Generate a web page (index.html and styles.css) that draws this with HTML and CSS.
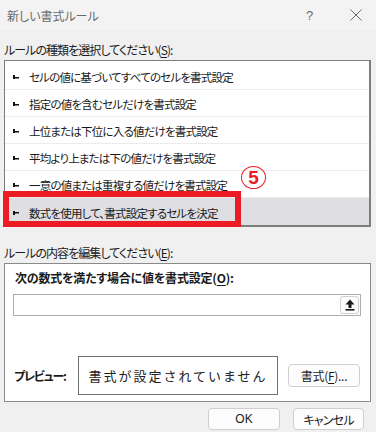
FILE: index.html
```html
<!DOCTYPE html>
<html lang="ja">
<head>
<meta charset="utf-8">
<title>新しい書式ルール</title>
<link rel="stylesheet" href="styles.css">
</head>
<body>
<div class="dialog">
  <div class="titlebar">
    <span class="title">新しい書式ルール</span>
    <span class="help">?</span>
    <span class="close"><svg width="12" height="12" viewBox="0 0 12 12"><path d="M0.5 0.5 L11.5 11.5 M11.5 0.5 L0.5 11.5" stroke="#6a6a6a" stroke-width="1" fill="none"/></svg></span>
  </div>
  <div class="label first">ルールの種類を選択してください(<u>S</u>):</div>
  <ul class="rules">
    <li><span class="bullet"></span>セルの値に基づいてすべてのセルを書式設定</li>
    <li><span class="bullet"></span>指定の値を含むセルだけを書式設定</li>
    <li><span class="bullet"></span>上位または下位に入る値だけを書式設定</li>
    <li><span class="bullet"></span>平均より上または下の値だけを書式設定</li>
    <li><span class="bullet"></span>一意の値または重複する値だけを書式設定</li>
    <li class="selected"><span class="bullet"></span>数式を使用して、書式設定するセルを決定</li>
  </ul>
  <div class="label second">ルールの内容を編集してください(<u>E</u>):</div>
  <div class="group">
    <div class="group-title">次の数式を満たす場合に値を書式設定(<u>O</u>):</div>
    <div class="formula">
      <div class="ref-btn"><svg width="10" height="12" viewBox="0 0 10 12"><path d="M5 0.5 L9.5 5.5 L6.5 5.5 L6.5 9 L3.5 9 L3.5 5.5 L0.5 5.5 Z" fill="#1a1a1a"/><rect x="0.5" y="10" width="9" height="1.6" fill="#1a1a1a"/></svg></div>
    </div>
    <div class="preview-row">
      <span class="preview-label">プレビュー:</span>
      <div class="preview">書式が設定されていません</div>
      <div class="btn format-btn">書式(<u>F</u>)...</div>
    </div>
  </div>
  <div class="actions">
    <div class="btn ok">OK</div>
    <div class="btn cancel">キャンセル</div>
  </div>
  <div class="highlight"></div>
  <div class="badge">5</div>
</div>
</body>
</html>
```
FILE: styles.css
```css
html, body {
  margin: 0;
  padding: 0;
}
body {
  background: #f0f0f0;
  font-family: "Noto Sans CJK JP", "Noto Sans", sans-serif;
  font-size: 12px;
  color: #1a1a1a;
  font-feature-settings: "palt";
}
.dialog {
  position: relative;
  width: 376px;
  height: 432px;
  overflow: hidden;
}
.titlebar {
  height: 30px;
  display: flex;
  align-items: center;
  padding-left: 7px;
  background: #f3f3f3;
}
.title {
  flex: 1;
  color: #6a6a6a;
  font-size: 12px;
}
.help {
  color: #6a6a6a;
  font-family: "Liberation Sans", sans-serif;
  font-size: 13px;
  width: 10px;
  margin-right: 34px;
}
.close {
  display: flex;
  margin-right: 14px;
}
.label {
  height: 16px;
  line-height: 16px;
  padding-left: 4px;
  font-size: 12px;
  letter-spacing: -0.95px;
}
.label.first { margin-top: 12px; }
.label.second { margin-top: 18px; }
u { text-decoration-thickness: 1px; text-underline-offset: 2px; }
.rules {
  list-style: none;
  margin: 2px 5px 0 4px;
  padding: 2px 0 0 0;
  background: #fff;
  border: 1px solid #7d7d7d;
  border-right-width: 2px;
  border-bottom-width: 2px;
}
.rules li {
  height: 24px;
  display: flex;
  align-items: center;
  border-bottom: 1px solid #ececec;
  padding-left: 8px;
  padding-top: 2px;
  font-size: 11.5px;
  letter-spacing: -0.8px;
}
.rules li:last-child {
  border-bottom: none;
  height: 25px;
}
.rules li.selected {
  background: #dedee3;
}
.bullet {
  display: inline-block;
  width: 6px;
  height: 4px;
  margin-right: 10px;
  background:
    linear-gradient(#111, #111) 0 0 / 2px 4px no-repeat,
    linear-gradient(#111, #111) 0 1.5px / 6px 1.5px no-repeat;
}
.group {
  margin: 2px 5px 0 4px;
  border: 1px solid #8a8a8a;
  background: #fff;
  padding: 6px 9px 6px 8px;
}
.group-title {
  height: 16px;
  line-height: 16px;
  font-weight: bold;
  padding-left: 2px;
  letter-spacing: -0.2px;
}
.formula {
  margin-top: 8px;
  height: 20px;
  border: 1px solid #adadad;
  display: flex;
  justify-content: flex-end;
  align-items: center;
  padding-right: 1px;
}
.ref-btn {
  width: 19px;
  height: 18px;
  border: 1px solid #d0d0d0;
  border-radius: 3px;
  box-sizing: border-box;
  display: flex;
  align-items: center;
  justify-content: center;
  background: #fdfdfd;
}
.preview-row {
  margin-top: 40px;
  height: 39px;
  display: flex;
  align-items: center;
}
.preview-label {
  font-weight: bold;
  width: 64px;
  padding-left: 1px;
  letter-spacing: -1.2px;
}
.preview {
  width: 198px;
  height: 37px;
  border: 1px solid #707070;
  display: flex;
  align-items: center;
  justify-content: center;
  font-size: 13px;
  letter-spacing: 2px;
  color: #222;
  font-feature-settings: normal;
}
.btn {
  box-sizing: border-box;
  border: 1px solid #cfcfcf;
  border-radius: 4px;
  background: #fdfdfd;
  display: flex;
  align-items: center;
  justify-content: center;
}
.format-btn {
  margin-left: 10px;
  width: 72px;
  height: 23px;
  letter-spacing: -0.3px;
}
.actions {
  display: flex;
  justify-content: flex-end;
  gap: 13px;
  margin-top: 6px;
  padding-right: 12px;
}
.actions .btn {
  height: 22px;
}
.ok { width: 72px; font-family: "Liberation Sans", sans-serif; }
.cancel { width: 71px; letter-spacing: -0.8px; }
.highlight {
  position: absolute;
  left: 3px;
  top: 191px;
  width: 226px;
  height: 24px;
  border: 6px solid #ed1c24;
}
.badge {
  position: absolute;
  left: 241px;
  top: 166px;
  width: 23px;
  height: 21px;
  border: 1.5px solid #ed1c24;
  border-radius: 50%;
  color: #ed1c24;
  font-family: "Liberation Sans", sans-serif;
  font-weight: bold;
  font-size: 19px;
  line-height: 21px;
  text-align: center;
}
```
